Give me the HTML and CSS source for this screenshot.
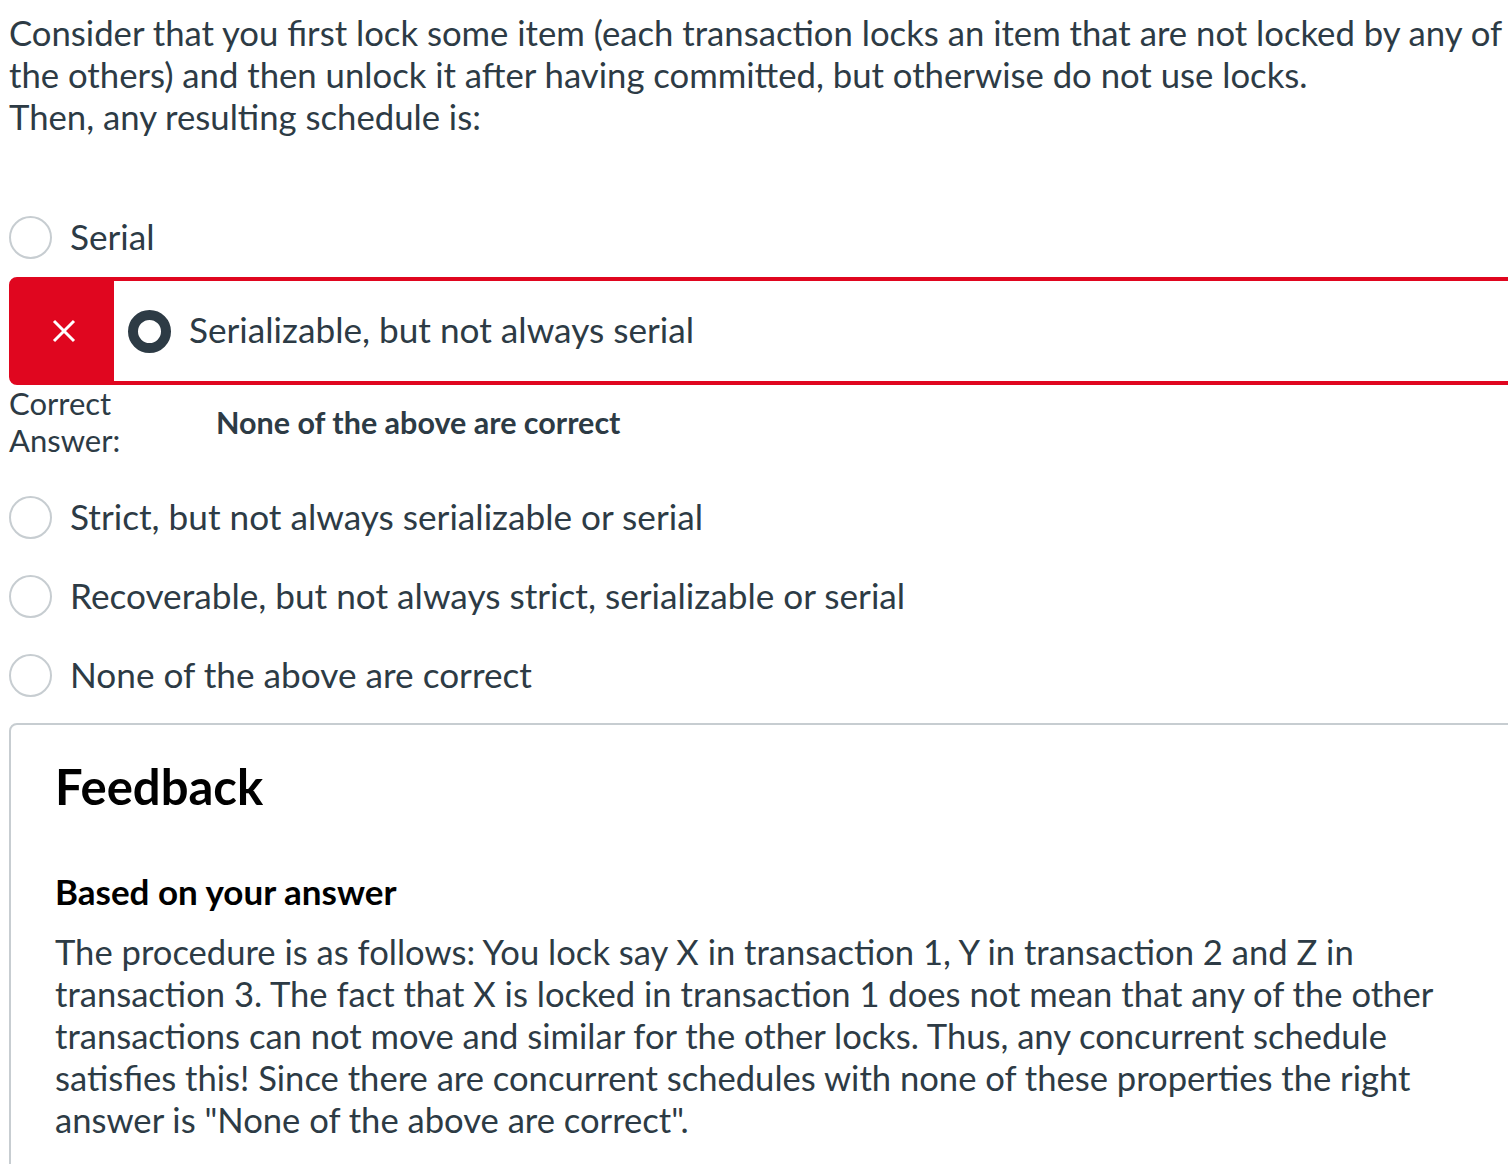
FILE: index.html
```html
<!DOCTYPE html>
<html lang="en">
<head>
    <meta charset="UTF-8">
    <meta name="viewport" content="width=device-width, initial-scale=1.0">
    <title>Quiz result</title>
    <link rel="stylesheet" href="styles.css">
</head>
<body>
    <div class="question">
        <div class="question-text">
            Consider that you first lock some item (each transaction locks an item that are not locked by any of the others) and then unlock it after having committed, but otherwise do not use locks.<br>
            Then, any resulting schedule is:
        </div>

        <div class="answers">
            <div class="answer">
                <span class="radio"></span>
                <span class="answer-text">Serial</span>
            </div>

            <div class="answer-wrong">
                <div class="flag">
                    <svg width="24" height="24" viewBox="0 0 24 24">
                        <path d="M2 2 L22 22 M22 2 L2 22" stroke="#fff" stroke-width="3" fill="none"/>
                    </svg>
                </div>
                <div class="answer">
                    <span class="radio checked"></span>
                    <span class="answer-text">Serializable, but not always serial</span>
                </div>
            </div>

            <div class="correct-answer">
                <div class="correct-label">Correct<br>Answer:</div>
                <div class="correct-text">None of the above are correct</div>
            </div>

            <div class="answer">
                <span class="radio"></span>
                <span class="answer-text">Strict, but not always serializable or serial</span>
            </div>
            <div class="answer">
                <span class="radio"></span>
                <span class="answer-text">Recoverable, but not always strict, serializable or serial</span>
            </div>
            <div class="answer">
                <span class="radio"></span>
                <span class="answer-text">None of the above are correct</span>
            </div>
        </div>

        <div class="feedback">
            <h2>Feedback</h2>
            <h3>Based on your answer</h3>
            <p>The procedure is as follows: You lock say X in transaction 1, Y in transaction 2 and Z in transaction 3. The fact that X is locked in transaction 1 does not mean that any of the other transactions can not move and similar for the other locks. Thus, any concurrent schedule satisfies this! Since there are concurrent schedules with none of these properties the right answer is "None of the above are correct".</p>
        </div>
    </div>
</body>
</html>
```

FILE: styles.css
```css
html {
    overflow: hidden;
}
body {
    font-family: 'Lato', 'Liberation Sans', sans-serif;
    color: #2d3b45;
    background-color: #ffffff;
    margin: 0;
    padding: 12px 0 0 9px;
}
.question {
    width: 1530px;
}
.question-text {
    font-size: 34.7px;
    line-height: 42px;
}
.answers {
    margin-top: 60px;
}
.answer {
    display: flex;
    align-items: center;
    height: 79px;
}
.answer-text {
    font-size: 35.2px;
    line-height: 42px;
    padding-bottom: 4px;
}
.radio {
    box-sizing: border-box;
    width: 43px;
    height: 43px;
    border: 2px solid #c7cdd1;
    border-radius: 50%;
    margin-right: 18px;
    flex-shrink: 0;
}
.radio.checked {
    border: 10px solid #2d3b45;
    box-shadow: 0 0 0 1px #ffffff inset;
}
.answer-wrong {
    display: flex;
    height: 108px;
    box-sizing: border-box;
    border: 4px solid #e0061f;
    border-radius: 8px;
}
.answer-wrong .answer {
    height: auto;
    padding-left: 14px;
}
.flag {
    width: 101px;
    background-color: #e0061f;
    display: flex;
    align-items: center;
    justify-content: center;
}
.correct-answer {
    display: flex;
    align-items: center;
    margin-bottom: 19px;
}
.correct-label {
    width: 207px;
    font-size: 31px;
    line-height: 37px;
}
.correct-text {
    font-size: 30.5px;
    font-weight: 700;
}
.feedback {
    margin-top: 8px;
    border: 2px solid #c7cdd1;
    border-radius: 8px;
    padding: 31px 44px 40px 44px;
}
.feedback h2 {
    font-size: 49px;
    line-height: 60px;
    font-weight: 700;
    color: #000000;
    margin: 0 0 54px 0;
}
.feedback h3 {
    font-size: 35px;
    line-height: 42px;
    font-weight: 700;
    color: #000000;
    margin: 0 0 19px 0;
}
.feedback p {
    font-size: 34.6px;
    line-height: 42px;
    margin: 0;
}
```
